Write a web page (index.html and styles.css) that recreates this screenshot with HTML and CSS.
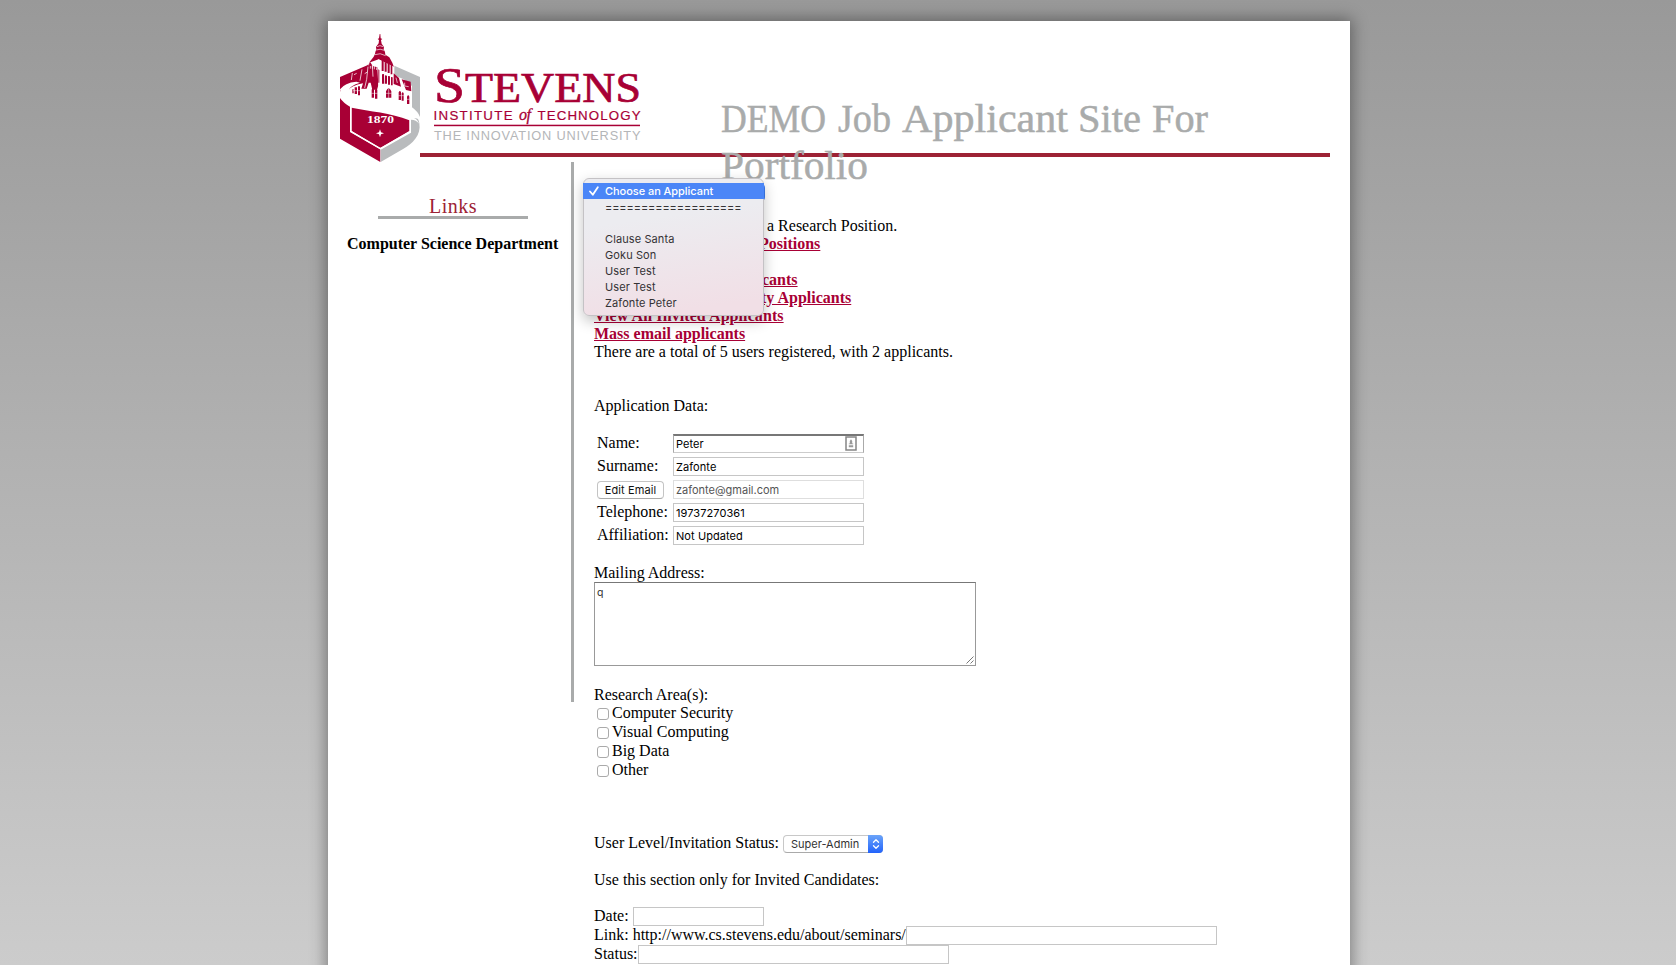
FILE: index.html
```html
<!DOCTYPE html>
<html lang="en">
<head>
<meta charset="utf-8">
<title>DEMO Job Applicant Site For Portfolio</title>
<link rel="stylesheet" href="styles.css">
</head>
<body>
<div class="page">
  <header class="header">
    <svg class="logo" viewBox="338 30 306 136" width="306" height="136" role="img" aria-label="Stevens Institute of Technology">
      <g transform="translate(338 30) scale(.33333)">
        <path fill="#b9bbbd" d="M169 107L246 141V261Q240 245 222 232V168L197 148L169 136Z"/>
        <!-- left wall and mansard roofs -->
        <path fill="#a80035" d="M6 141L88 106L97 97L104 108L118 112L121 166L117 179H103L98 158H92L86 176H70L75 160Q40 166 28 183Q24 200 44 207Q14 201 6 180Z"/>
        <path fill="#fff" d="M6 178Q20 158 55 155L66 158Q32 168 31 186Q31 199 50 206L30 212Q10 202 6 178Z"/>
        <path fill="none" stroke="#fff" stroke-width="2.2" d="M43 129L40 150M48 134L56 130M72 118L66 152M80 131L88 126M90 110L86 148L80 174M103 104L105 140M92 97V106M97 108V116M103 108V116M109 108V118M116 112V120"/>
        <!-- spire and belfry -->
        <path fill="#a80035" d="M125 12h2l1 13 5 2-4 3 2 11 7 10-1 7 4 8 1 8 12 8 9 16 5 14-46-24-29 10 14-18 4-8 1-6 3-8-1-7 8-11 1-10-4-3 4-2z"/>
        <path fill="none" stroke="#fff" stroke-width="2" d="M117 50L126 47L136 50M115 60Q126 55 139 61M111 74Q126 67 143 77"/>
        <!-- tower -->
        <path fill="#fff" d="M121 88L168 110V182L121 178Z"/>
        <path fill="#a80035" d="M131 91l6 3v29h-6zM140 95l6 3v27h-6zM149 99l6 3v27h-6zM158 104l5 2v27h-5zM132 133l6-1 1 29h-7zM141 136l6 1v24h-6zM150 138l6 1v25h-6zM159 141l5 1v24h-5zM121 118l3 2v38h-3z"/>
        <path fill="#a80035" d="M167 130L183 144L189 170L167 162ZM191 148L218 155L220 184L204 180Z"/>
        <path fill="none" stroke="#fff" stroke-width="2" d="M174 143L178 159M200 158V168L212 170"/>
        <!-- lower windows -->
        <path fill="#a80035" d="M50 172h7v20h-7zM60 169h6v27h-6zM43 178h4v12h-4zM101 179q4-8 7 0v24h-7zM111 180q4-8 7 0v26h-7zM144 184q8-19 16 0v19h-16zM182 187q4-8 7 0v23h-7zM191 190q3-7 6 0v22h-6zM207 200q4-8 7 0v22h-7z"/>
        <path fill="none" stroke="#fff" stroke-width="1.500" d="M45 182h22M100 190h19M143 190h18M181 197h17M206 208h9M152 176v28"/>
        <!-- shield -->
        <path fill="#a80035" d="M6 204Q16 219 36 230V306L127 358V396L6 326Z"/>
        <path fill="#a80035" d="M41 233C95 245 158 247 214 271V303L127 354L41 303Z"/>
        <path fill="#b9bbbd" d="M219 268C235 263 242 263 244 280C250 315 224 342 194 358L128 396V359L219 308Z"/>
        <path fill="#fff" d="M205 258C224 263 238 263 243 281Q234 268 217 269Z"/>
        <path fill="none" stroke="#fff" stroke-width="4" d="M38 229V304L127 356L217 305V269"/>
        <text class="crest-year" x="87" y="279" textLength="81" lengthAdjust="spacingAndGlyphs">1870</text>
        <path fill="#fff" d="M126 298l3 9 9 3-9 3-3 9-3-9-9-3 9-3z"/>
      </g>
      <text class="wordmark" x="434" y="102" font-size="50" textLength="31" lengthAdjust="spacingAndGlyphs">S</text>
      <text class="wordmark" x="465" y="102" font-size="42" textLength="176" lengthAdjust="spacingAndGlyphs">TEVENS</text>
      <text class="institute" x="433.500" y="119.700" textLength="79">INSTITUTE</text>
      <text class="of" x="519" y="119.700" textLength="12">of</text>
      <text class="institute" x="537.500" y="119.700" textLength="103">TECHNOLOGY</text>
      <rect x="434" y="124.700" width="206" height="1.500" fill="#a80035"/>
      <text class="tagline" x="434" y="140.300" textLength="206.500">THE INNOVATION UNIVERSITY</text>
    </svg>
    <div class="rule"></div>
    <h1 class="title">
      <svg width="500" height="100" viewBox="0 0 500 100">
        <text x="0" y="36" textLength="105" lengthAdjust="spacingAndGlyphs">DEMO</text>
        <text x="117" y="36" textLength="53" lengthAdjust="spacingAndGlyphs">Job</text>
        <text x="181" y="36" textLength="166" lengthAdjust="spacingAndGlyphs">Applicant</text>
        <text x="357" y="36" textLength="63" lengthAdjust="spacingAndGlyphs">Site</text>
        <text x="431" y="36" textLength="56" lengthAdjust="spacingAndGlyphs">For</text>
        <text x="0" y="83" textLength="147" lengthAdjust="spacingAndGlyphs">Portfolio</text>
      </svg>
    </h1>
  </header>

  <div class="columns">
    <aside class="sidebar">
      <h2 class="links">Links</h2>
      <p class="dept">Computer Science Department</p>
    </aside>
    <main class="main">
      <div class="chooser">
        <div class="chooser-select"></div>
        <ul class="menu">
          <li class="chosen"><svg class="tick" viewBox="0 0 10 10" width="10" height="10"><path d="M1 5.500L3.800 8.700L8.800 1.200" fill="none" stroke="#fff" stroke-width="1.800" stroke-linecap="round" stroke-linejoin="round"/></svg>Choose an Applicant</li>
          <li class="equals">===================</li>
          <li></li>
          <li>Clause Santa</li>
          <li>Goku Son</li>
          <li>User Test</li>
          <li>User Test</li>
          <li>Zafonte Peter</li>
        </ul>
      </div>
      <div class="intro">
        <p class="after-a">a Research Position.</p>
        <p class="after-b"><a>Positions</a></p>
        <p>&nbsp;</p>
        <p class="after-c"><a>cants</a></p>
        <p class="after-d"><a>ty Applicants</a></p>
        <p class="invited-link"><a>View All Invited Applicants</a></p>
        <p><a>Mass email applicants</a></p>
        <p>There are a total of 5 users registered, with 2 applicants.</p>
      </div>
      <p class="data-title">Application Data:</p>
      <form class="fields">
        <label>Name:</label>
        <div class="field focused">Peter
          <svg class="card" width="12" height="15" viewBox="0 0 12 15"><rect x="1" y="1" width="10" height="13" fill="#fff" stroke="#858585" stroke-width="1.500"/><path d="M6 3.200L7.200 5V7.500H8.200V8.300H3.800V7.500H4.800V5ZM3.800 9.200h4.400v2H3.800z" fill="#999"/></svg>
        </div>
        <label>Surname:</label>
        <div class="field">Zafonte</div>
        <button type="button" class="edit">Edit Email</button>
        <div class="field disabled">zafonte@gmail.com</div>
        <label>Telephone:</label>
        <div class="field">19737270361</div>
        <label>Affiliation:</label>
        <div class="field">Not Updated</div>
      </form>
      <p class="mail-title">Mailing Address:</p>
      <div class="address">q
        <svg class="grip" width="8" height="8" viewBox="0 0 8 8"><path d="M.5 7.500L7.500 .5M4.500 7.500L7.500 4.500" stroke="#555" stroke-width=".8"/></svg>
      </div>
      <p class="areas-title">Research Area(s):</p>
      <ul class="areas">
        <li><span class="box"></span>Computer Security</li>
        <li><span class="box"></span>Visual Computing</li>
        <li><span class="box"></span>Big Data</li>
        <li><span class="box"></span>Other</li>
      </ul>
      <div class="level"><span class="level-label">User Level/Invitation Status:</span>
        <span class="select"><span class="select-text">Super-Admin</span><span class="arrows"><svg width="8" height="12" viewBox="0 0 8 12"><path d="M1.500 4.300L4 1.800L6.500 4.300M1.500 7.700L4 10.200L6.500 7.700" fill="none" stroke="#fff" stroke-width="1.300" stroke-linecap="round" stroke-linejoin="round"/></svg></span></span>
      </div>
      <p class="invited">Use this section only for Invited Candidates:</p>
      <div class="line"><span class="date-label">Date:</span><div class="field date"></div></div>
      <div class="line"><span class="link-label">Link: http://www.cs.stevens.edu/about/seminars/</span><div class="field wide"></div></div>
      <div class="line"><span class="status-label">Status:</span><div class="field wide"></div></div>
    </main>
  </div>
</div>
</body>
</html>
```
FILE: styles.css
```css
* { box-sizing: border-box; }
html { height: 100%; }
body {
  margin: 0;
  height: 965px;
  overflow: hidden;
  background: linear-gradient(#999, #ccc);
  font: 16px/18px "Liberation Serif", serif;
  color: #000;
}
p, ul, h1, h2 { margin: 0; padding: 0; list-style: none; font-weight: normal; }
.page {
  width: 1022px;
  height: 980px;
  margin: 21px 0 0 328px;
  background: #fff;
  box-shadow: 0 0 15px 2px rgba(0, 0, 0, .38);
}
.header { position: relative; height: 141px; }
.logo { position: absolute; left: 10px; top: 9px; }
.crest-year { font: bold 28px "Liberation Serif", serif; fill: #fff; }
.wordmark { font-family: "Liberation Serif", serif; fill: #a80035; stroke: #a80035; stroke-width: .7px; }
.institute { font: 13.3px "Liberation Sans", sans-serif; fill: #a80035; stroke: #a80035; stroke-width: .2px; }
.of { font: italic 16px "Liberation Serif", serif; fill: #a80035; stroke: #a80035; stroke-width: .3px; }
.tagline { font: 12.8px "Liberation Sans", sans-serif; fill: #b4b6b8; }
.rule { position: absolute; left: 92px; top: 132px; width: 910px; height: 4px; background: #9d2235; }
.title { position: absolute; left: 393px; top: 75px; height: 100px; }
.title svg { display: block; }
.title text { font: 41px "Liberation Serif", serif; fill: #a9abab; stroke: #a9abab; stroke-width: .5px; }
.columns { display: flex; }
.sidebar { width: 243px; height: 540px; }
.links {
  width: 150px;
  height: 57px;
  margin-left: 50px;
  padding: 33px 0 0 0;
  border-bottom: 3px solid #a9abab;
  text-align: center;
  font-size: 20px;
  line-height: 22px;
  color: #9d2235;
  letter-spacing: .5px;
}
.dept { margin: 16px 0 0 19px; font-weight: bold; white-space: nowrap; }
.main {
  flex: 1;
  padding-left: 23px;
  position: relative;
}
.main::before { content: ""; position: absolute; left: 0; top: 0; width: 3px; height: 540px; background: #a9abab; }
.chooser { position: relative; height: 55px; }
.chooser-select { position: absolute; left: 0; top: 22px; width: 171px; height: 17px; border-radius: 4px; background: #3c7bf0; }
.menu {
  position: absolute;
  z-index: 2;
  left: -11px;
  top: 16px;
  width: 181px;
  height: 138px;
  padding-top: 4px;
  border: 1px solid #c4c2c5;
  border-radius: 6px;
  background: linear-gradient(172deg, #ececf0 0%, #ececf0 30%, #f1dfe6 90%);
  box-shadow: 0 5px 14px rgba(0, 0, 0, .24);
  font: 11px/16px Inter, sans-serif;
  letter-spacing: .1px;
  color: #343235;
}
.menu li { height: 16px; padding-left: 21px; position: relative; }
.menu .chosen { margin-right: -1px; margin-left: -1px; padding-left: 22px; background: #4b86f7; color: #fff; font-weight: 500; letter-spacing: -.05px; }
.menu .equals { letter-spacing: -.1px; }
.tick { position: absolute; left: 6px; top: 3px; }
a { color: #a80035; font-weight: bold; text-decoration: underline; }
.after-a { padding-left: 173px; }
.after-b { padding-left: 165px; }
.after-c { padding-left: 168px; }
.after-d { padding-left: 167px; }
.data-title { margin-top: 36px; }
.fields { margin: 19px 0 0 3px; display: grid; grid-template-columns: 76px 191px; row-gap: 4px; }
.fields label { height: 19px; }
.field {
  position: relative;
  height: 19px;
  border: 1px solid #c6c6c6;
  padding-left: 2px;
  background: #fff;
  font: 11px/18px Inter, sans-serif;
  letter-spacing: .08px;
}
.focused { border-color: #777 #aaa #ccc; border-top-width: 2px; line-height: 17px; }
.disabled { border-color: #dedede; color: #555; letter-spacing: 0; }
.card { position: absolute; right: 6px; top: 0; }
.edit {
  width: 67px;
  height: 18px;
  margin-top: 1px;
  padding: 0;
  border: 1px solid #c4c4c4;
  border-bottom-color: #aaa;
  border-radius: 4px;
  background: #fff;
  font: 11px/16px Inter, sans-serif;
  letter-spacing: .1px;
  color: #111;
}
.invited-link { letter-spacing: .08px; }
.mail-title { margin-top: 19px; }
.address {
  position: relative;
  width: 382px;
  height: 84px;
  padding: 2px;
  border: 1px solid #999;
  border-top-color: #777;
  font: 10.5px/16px Inter, sans-serif;
  color: #333;
}
.grip { position: absolute; right: 1px; bottom: 1px; }
.areas-title { margin-top: 20px; }
.areas li { display: flex; height: 19px; }
.box { width: 12px; height: 12px; margin: 4px 3px 0 3px; border: 1px solid #aaa; border-radius: 3px; background: #fff; }
.level { display: flex; margin-top: 54px; }
.level-label { width: 189px; white-space: nowrap; }
.select {
  display: flex;
  width: 100px;
  height: 18px;
  margin-top: 1px;
  border: 1px solid #c8c8c8;
  border-bottom-color: #aaa;
  border-radius: 4px;
  font: 11px/17px Inter, sans-serif;
  color: #333;
}
.select-text { width: 84px; padding-left: 7px; }
.arrows { display: flex; align-items: center; justify-content: center; width: 15px; height: 18px; margin: -1px -1px 0 0; border-radius: 0 4px 4px 0; background: linear-gradient(#6ba4f9, #2263fb); }
.invited { margin: 18px 0; }
.line { display: flex; height: 19px; white-space: nowrap; }
.date-label { width: 39px; }
.link-label { width: 312px; }
.status-label { width: 44px; }
.date { width: 131px; }
.wide { width: 311px; }
```
